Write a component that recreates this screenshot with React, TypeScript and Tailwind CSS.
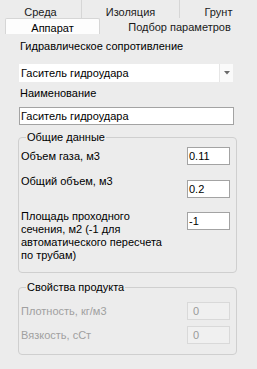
export default function App() {
  const font = "font-['Liberation_Sans','Noto_Sans',sans-serif]";
  return (
    <div className={`w-[257px] h-[369px] bg-[#ececec] overflow-hidden text-[11px] text-black ${font}`}>
      {/* Tabs row 1 */}
      <div className="flex h-[18px] leading-[15px] text-[#1a1a1a]">
        <div className="w-[82px] pt-[5px] text-center border-r border-[#d6d6d6]">Среда</div>
        <div className="w-[98px] pt-[5px] text-center border-r border-[#d6d6d6]">Изоляция</div>
        <div className="flex-1 pt-[5px] text-center">Грунт</div>
      </div>
      {/* Tabs row 2 */}
      <div className="flex h-[16px]">
        <div className="ml-[5px] w-[95px] h-[16px] pt-[3px] leading-[13px] text-center bg-[#fdfdfd] border border-b-0 border-[#d6d6d6] rounded-t-[2px]">
          Аппарат
        </div>
        <div className="flex-1 pt-[3px] pl-[2px] leading-[13px] text-center text-[#1a1a1a]">Подбор параметров</div>
      </div>
      {/* Content */}
      <div className="pl-[19px] flex flex-col">
        <div className="mt-[6px] leading-[13px] pl-[1px]">Гидравлическое сопротивление</div>
        <div className="mt-[11px] w-[214px] h-[18px] bg-white flex items-stretch">
          <div className="flex-1 pl-[2px] leading-[18px]">Гаситель гидроудара</div>
          <div className="w-[14px] border-l border-[#e6e6e6] bg-[#fafafa] flex items-center justify-center">
            <svg width="6" height="4" viewBox="0 0 6 4">
              <path d="M0 0 L6 0 L3 3.5 Z" fill="#6a6a6a" />
            </svg>
          </div>
        </div>
        <div className="mt-[5px] leading-[13px] pl-[1px]">Наименование</div>
        <div className="mt-[7px] w-[215px] h-[18px] bg-white border border-[#a3a3a3] pl-[1px] leading-[16px]">
          Гаситель гидроудара
        </div>

        {/* Group 1 */}
        <div className="relative mt-[12px] ml-[-1px] w-[219px] border border-[#cfcfcf] rounded-[4px] pl-[2px] pr-[6px] pb-[10px] flex flex-col">
          <div className="absolute top-[-7px] left-[7px] px-[1px] bg-[#ececec] leading-[13px]">Общие данные</div>
          <div className="mt-[9px] flex items-center justify-between">
            <div className="leading-[13px]">Объем газа, м3</div>
            <div className="w-[43px] h-[18px] bg-white border border-[#a3a3a3] pl-[1px] leading-[16px]">0.11</div>
          </div>
          <div className="mt-[10px] flex items-start justify-between">
            <div className="leading-[13px]">Общий объем, м3</div>
            <div className="mt-[5px] w-[43px] h-[18px] bg-white border border-[#a3a3a3] pl-[1px] leading-[16px]">0.2</div>
          </div>
          <div className="mt-[12px] flex items-start justify-between">
            <div className="leading-[13px]">
              Площадь проходного
              <br />
              сечения, м2 (-1 для
              <br />
              автоматического пересчета
              <br />
              по трубам)
            </div>
            <div className="mt-[2px] w-[43px] h-[18px] bg-white border border-[#a3a3a3] pl-[1px] leading-[16px]">-1</div>
          </div>
        </div>

        {/* Group 2 */}
        <div className="relative mt-[14px] ml-[-1px] w-[219px] border border-[#cfcfcf] rounded-[4px] pl-[2px] pr-[6px] pb-[10px] flex flex-col">
          <div className="absolute top-[-7px] left-[7px] px-[1px] bg-[#ececec] leading-[13px]">Свойства продукта</div>
          <div className="mt-[14px] flex items-center justify-between text-[#a0a0a0]">
            <div className="leading-[13px]">Плотность, кг/м3</div>
            <div className="w-[43px] h-[18px] bg-[#f0f0f0] border border-[#d9d9d9] pl-[5px] leading-[16px] text-[#9a9a9a]">0</div>
          </div>
          <div className="mt-[6px] flex items-center justify-between text-[#a0a0a0]">
            <div className="leading-[13px]">Вязкость, сСт</div>
            <div className="w-[43px] h-[18px] bg-[#f0f0f0] border border-[#d9d9d9] pl-[5px] leading-[16px] text-[#9a9a9a]">0</div>
          </div>
        </div>
      </div>
    </div>
  );
}
